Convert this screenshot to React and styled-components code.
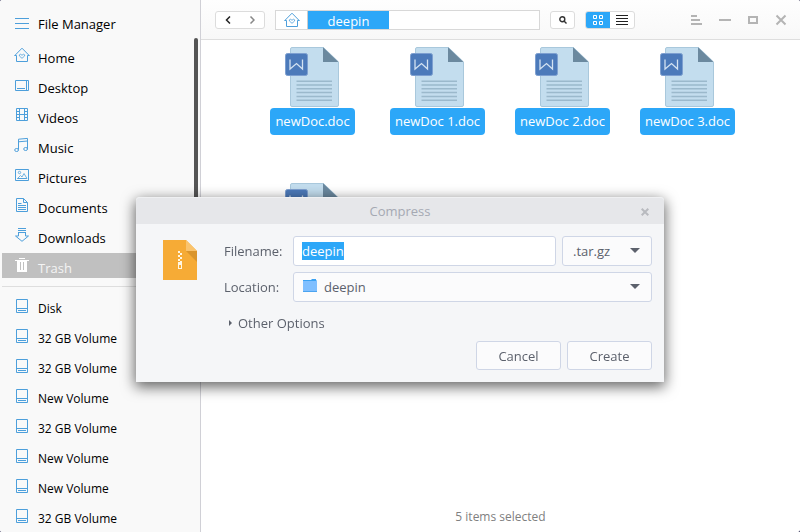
import React, { useEffect, useRef } from "react";
import styled, { createGlobalStyle } from "styled-components";

const GlobalStyle = createGlobalStyle`
  *, *::before, *::after { box-sizing: border-box; }
  body {
    margin: 0;
    background: #12103c;
    font-family: "Open Sans", "Noto Sans", sans-serif;
    font-size: 13px;
    line-height: 18px;
    color: #000;
    overflow: hidden;
  }
  button, input, select { font: inherit; color: inherit; margin: 0; }
  svg { display: block; flex: none; }
`;

const Window = styled.div`
  display: flex;
  height: 100vh;
  overflow: hidden;
  background: #fff;
  border-radius: 2px;
`;

/* ---------- sidebar ---------- */

const Sidebar = styled.aside`
  position: relative;
  flex: none;
  width: 201px;
  padding-left: 2px;
  background: #f9f9f9;
  border-right: 1px solid #d0d0d6;
  overflow: hidden;
`;

const SidebarTitle = styled.h1`
  display: flex;
  align-items: center;
  gap: 9px;
  height: 43px;
  margin: 0;
  padding: 4px 0 0 13px;
  font-size: 13px;
  font-weight: 400;
`;

const PlaceList = styled.ul`
  display: grid;
  gap: 5px;
  margin: 0;
  padding: 0;
  list-style: none;
  font-size: ${(p) => (p.$small ? 12 : 13)}px;
`;

const Place = styled.a`
  display: flex;
  align-items: flex-start;
  gap: 8px;
  height: 25px;
  padding: 4px 0 0 12px;
  text-decoration: none;
  color: ${(p) => (p.$active ? "#f4f4f4" : "#000")};
  background: ${(p) => (p.$active ? "#c0c0c0" : "transparent")};
`;

const PlaceName = styled.span`
  padding-top: 2px;
`;

const Divider = styled.hr`
  height: 1px;
  margin: 8px 0 7px;
  border: 0;
  background: #dedede;
`;

const ScrollThumb = styled.div`
  position: absolute;
  top: 38px;
  right: 2px;
  width: 4px;
  height: 50%;
  border-radius: 2px;
  background: #555;
`;

/* ---------- toolbar ---------- */

const Main = styled.main`
  display: flex;
  flex: 1;
  flex-direction: column;
  min-width: 0;
`;

const Toolbar = styled.header`
  display: flex;
  align-items: center;
  gap: 10px;
  height: 40px;
  padding: 1px 11px 0 14px;
  border-bottom: 1px solid #dedede;
  background: linear-gradient(#fefefe, #f8f8f8);
`;

const Group = styled.div`
  display: flex;
  height: 18px;
  border: 1px solid #dcdcdc;
  border-radius: 3px;
  background: #fff;
  overflow: hidden;
`;

const ToolButton = styled.button`
  display: flex;
  align-items: center;
  justify-content: center;
  width: ${(p) => p.$width || 24}px;
  padding: 0;
  border: 0;
  color: ${(p) => p.$color || "#333"};
  background: ${(p) => (p.$on ? "#2ca7f8" : "transparent")};
`;

const PathBar = styled.nav`
  display: flex;
  flex: 0 1 265px;
  height: 20px;
  border: 1px solid #d8d8d8;
  background: #fff;
`;

const PathHome = styled.a`
  display: flex;
  align-items: center;
  justify-content: center;
  width: 32px;
  border-right: 1px solid #ccc;
`;

const PathPart = styled.a`
  width: 81px;
  line-height: 20px;
  text-align: center;
  text-decoration: none;
  color: #fff;
  background: #2ca7f8;
`;

const WindowControls = styled.div`
  display: flex;
  gap: 12px;
  margin-left: auto;
`;

const WindowButton = styled.button`
  width: 16px;
  height: 16px;
  padding: 0;
  border: 0;
  background: transparent;
`;

/* ---------- files ---------- */

const Files = styled.ul`
  display: grid;
  flex: 1;
  grid-template-columns: repeat(auto-fill, 125px);
  grid-auto-rows: 136px;
  align-content: start;
  margin: 0;
  padding: 7px 0 0 49px;
  list-style: none;
`;

const File = styled.li`
  display: flex;
  flex-direction: column;
  align-items: center;
  gap: 1px;
`;

const FileName = styled.span`
  padding: 0 5px;
  border-radius: 4px;
  line-height: 27px;
  color: #fff;
  background: #2ca7f8;
`;

const StatusBar = styled.footer`
  height: 24px;
  font-size: 12px;
  text-align: center;
  color: #808080;
`;

/* ---------- dialog ---------- */

const Overlay = styled.div`
  position: fixed;
  inset: 0;
  display: flex;
  align-items: flex-start;
  justify-content: center;
  padding-top: 197px;
`;

const Dialog = styled.div`
  width: 66%;
  border-radius: 4px 4px 0 0;
  color: #5c616c;
  background: #f5f6f8;
  box-shadow: 0 4px 14px 1px rgba(0, 0, 0, 0.6);
`;

const DialogHeader = styled.header`
  display: grid;
  grid-template-columns: 38px 1fr 38px;
  align-items: center;
  height: 27px;
  border-top: 1px solid #eff0f2;
  border-radius: 4px 4px 0 0;
  background: #e6e7ea;
`;

const DialogTitle = styled.h2`
  grid-column: 2;
  margin: 0;
  font-size: 13px;
  font-weight: 400;
  line-height: 27px;
  text-align: center;
  color: #a5a9b3;
`;

const CloseButton = styled.button`
  display: flex;
  justify-content: center;
  padding: 0;
  border: 0;
  background: transparent;
`;

const DialogBody = styled.form`
  display: flex;
  gap: 27px;
  padding: 12px 12px 12px 27px;
`;

const ArchivePicture = styled.div`
  padding-top: 4px;
`;

const Fields = styled.div`
  display: grid;
  flex: 1;
  grid-template-columns: 63px 1fr 90px;
  gap: 6px;
  align-items: center;
`;

const Label = styled.label`
  white-space: nowrap;
`;

const NameInput = styled.input`
  width: 100%;
  height: 30px;
  padding: 0 8px;
  border: 1px solid #cfd6e6;
  border-radius: 3px;
  outline: none;
  background: #fff;
  &::selection { color: #fff; background: #2ca7f8; }
`;

const SelectBox = styled.div`
  position: relative;
  grid-column: ${(p) => (p.$wide ? "span 2" : "auto")};
`;

const Select = styled.select`
  display: block;
  width: 100%;
  height: 30px;
  padding: 0 30px 0 ${(p) => (p.$icon ? 30 : 10)}px;
  border: 1px solid #cfd6e6;
  border-radius: 3px;
  appearance: none;
  background: #fbfbfc;
`;

const SelectArrow = styled.svg`
  position: absolute;
  top: 12px;
  right: 12px;
  pointer-events: none;
`;

const SelectIcon = styled.svg`
  position: absolute;
  top: 6px;
  left: 9px;
  pointer-events: none;
`;

const Expander = styled.button`
  display: flex;
  grid-column: 1 / -1;
  align-items: center;
  justify-self: start;
  gap: 6px;
  height: 27px;
  padding: 2px 0 0 5px;
  border: 0;
  background: transparent;
`;

const Actions = styled.div`
  display: flex;
  grid-column: 1 / -1;
  justify-content: flex-end;
  gap: 6px;
`;

const ActionButton = styled.button`
  width: 85px;
  height: 29px;
  padding: 0;
  border: 1px solid #cfd6e6;
  border-radius: 3px;
  background: #fbfbfc;
`;

/* ---------- drawings ---------- */

const HomeIcon = () => (
  <svg width="16" height="16" viewBox="0 0 16 16" fill="none" stroke="#4d9fdb">
    <path d="M.8 8.5 8 1.2l7.2 7.3M.5 8.5h2v6h11v-6h2" />
    <path d="M8 11.3 5.400 9V7.800L6.300 7.200 8 8.200l1.700-1 .9.6V9z" strokeWidth=".8" />
  </svg>
);

const shapes = {
  Desktop: (
    <>
      <path d="M1.5 3.5h13v10h-13zM12.5 3.5v10" />
      <path d="M3 11.5h8" />
    </>
  ),
  Videos: (
    <path d="M2.5 1.5h11v12h-11zM5.5 1.5v12M10.5 1.5v12M5.5 7.5h5M2.5 4.5h3M2.5 7.5h3M2.5 10.5h3M10.5 4.5h3M10.5 7.5h3M10.5 10.5h3" />
  ),
  Music: (
    <>
      <path d="M4.5 12.5V2.2l9-.8v10.800M4.5 4.800l9-.8" />
      <ellipse cx="2.600" cy="13" rx="1.900" ry="1.500" />
      <ellipse cx="11.600" cy="12" rx="1.900" ry="1.500" />
    </>
  ),
  Pictures: (
    <>
      <path d="M1.5 2.5h13v11h-13z" />
      <path d="m3.5 11.5 3-3 1.5 1.5 2-3.5 3 5zM3.5 11.5h9" strokeWidth=".8" />
      <circle cx="5.5" cy="5.500" r="1.2" strokeWidth=".8" />
    </>
  ),
  Documents: (
    <path d="M2.5 1.5h7l4 4v9h-11zM9.5 1.5v4h4M4 6.5h3.5M4 8.5h8M4 10.5h8M4 12.5h8" />
  ),
  Downloads: (
    <path d="M4 1.5h8M4 3.5h8M4 5.5h8M4.500 5.500v3.500h-3L8 14.300l6.500-5.300h-3V5.500" />
  ),
  Disk: <path d="M2.5 1.5h11v13h-11zM2.5 10.5h11M4 12.5h8" />,
};

const PlaceIcon = ({ kind }) => {
  if (kind === "Home") return <HomeIcon />;
  if (kind === "Trash")
    return (
      <svg width="16" height="16" viewBox="0 0 16 16">
        <path
          fill="#fff"
          fillRule="evenodd"
          d="M5 1h6v1h-6zM1 3h14v1h-14zM3 4h10v11H3zM6 5v8h1v-8zM9 5v8h1v-8z"
        />
      </svg>
    );
  return (
    <svg width="16" height="16" viewBox="0 0 16 16" fill="none" stroke="#4d9fdb">
      {shapes[kind]}
    </svg>
  );
};

const DocIcon = () => (
  <svg width="55" height="60" viewBox="0 0 55 60" fill="none">
    <path d="M7 .5h31.5L53.5 15v43q0 1.500-1.500 1.500H7q-1.500 0-1.500-1.500V2Q5.500.5 7 .5z" fill="#c3ddee" stroke="#a9c8dc" />
    <path d="M38 .3 53.500 15H38z" fill="#6b899f" />
    <path d="M11.500 34.200h35.500M11.500 38h35.500M11.500 41.800h35.500M11.500 45.600h35.500M11.500 49.400h35.500M11.500 53.200h35.500" stroke="#9bb9cc" strokeWidth="1.500" />
    <rect x=".5" y="6.500" width="22" height="22" rx="2" fill="#4c7aba" stroke="#7d9fd0" />
    <path d="M5 12.500v9.500l6.500-5.500L17.500 22v-9.500" stroke="#d3e2f1" strokeWidth="1.300" />
  </svg>
);

const ArchiveIcon = () => (
  <svg width="34" height="40" viewBox="0 0 34 40">
    <path d="M0 0h23l11 11v29H0z" fill="#f6ab36" />
    <path d="M23 11h11v11z" fill="#da952d" />
    <path d="M23 0v11h11z" fill="#fac36c" />
    <path
      fill="#fff6e4"
      fillRule="evenodd"
      d="M15 11h2v2h-2zM17 13h2v2h-2zM15 15h2v2h-2zM17 17h2v2h-2zM15 19h2v2h-2zM17 21h2v1h-2zM15 22h4v7h-4zM16 25v3h2v-3z"
    />
  </svg>
);

const Arrow = () => (
  <SelectArrow width="10" height="5" viewBox="0 0 10 5">
    <path d="M0 0h10L5 5z" fill="#5c616c" />
  </SelectArrow>
);

/* ---------- data ---------- */

const places = ["Home", "Desktop", "Videos", "Music", "Pictures", "Documents", "Downloads", "Trash"];
const volumes = ["Disk", "32 GB Volume", "32 GB Volume", "New Volume", "32 GB Volume", "New Volume", "New Volume", "32 GB Volume"];
const files = ["newDoc.doc", "newDoc 1.doc", "newDoc 2.doc", "newDoc 3.doc", ""];

const PlaceRow = ({ name, kind, active }) => (
  <li>
    <Place href="#" $active={active}>
      <PlaceIcon kind={kind} />
      <PlaceName>{name}</PlaceName>
    </Place>
  </li>
);

function CompressDialog() {
  const nameRef = useRef(null);
  useEffect(() => {
    nameRef.current.focus();
    nameRef.current.select();
  }, []);

  return (
    <Overlay>
      <Dialog role="dialog" aria-labelledby="dialog-title">
        <DialogHeader>
          <DialogTitle id="dialog-title">Compress</DialogTitle>
          <CloseButton type="button" aria-label="Close dialog">
            <svg width="8" height="8" viewBox="0 0 8 8" stroke="#b8babf" strokeWidth="2">
              <path d="m.7.7 6.600 6.600M7.300.7.7 7.300" />
            </svg>
          </CloseButton>
        </DialogHeader>
        <DialogBody onSubmit={(e) => e.preventDefault()}>
          <ArchivePicture>
            <ArchiveIcon />
          </ArchivePicture>
          <Fields>
            <Label htmlFor="filename">Filename:</Label>
            <NameInput id="filename" ref={nameRef} defaultValue="deepin" autoComplete="off" spellCheck={false} />
            <SelectBox>
              <Select aria-label="Archive type" defaultValue=".tar.gz">
                <option>.tar.gz</option>
                <option>.zip</option>
              </Select>
              <Arrow />
            </SelectBox>
            <Label htmlFor="location">Location:</Label>
            <SelectBox $wide>
              <Select id="location" $icon defaultValue="deepin">
                <option>deepin</option>
              </Select>
              <SelectIcon width="16" height="16" viewBox="0 0 16 16">
                <path d="M1 2h8l1-1h4v1l1 1v3H1z" fill="#3ba2f3" />
                <path d="M1 3h14v11H1z" fill="#80bfff" />
                <path d="M1 13h14v1H1z" fill="#4ba4f0" />
              </SelectIcon>
              <Arrow />
            </SelectBox>
            <Expander type="button" aria-expanded="false">
              <svg width="3" height="6" viewBox="0 0 3 6">
                <path d="M0 0l3 3-3 3z" fill="#5c616c" />
              </svg>
              Other Options
            </Expander>
            <Actions>
              <ActionButton type="button">Cancel</ActionButton>
              <ActionButton type="submit">Create</ActionButton>
            </Actions>
          </Fields>
        </DialogBody>
      </Dialog>
    </Overlay>
  );
}

export default function App() {
  return (
    <>
      <GlobalStyle />
      <Window>
        <Sidebar>
          <SidebarTitle>
            <svg width="14" height="11" viewBox="0 0 14 11" stroke="#4d9fdb">
              <path d="M0 .5h14M0 5.500h14M0 10.500h14" />
            </svg>
            File Manager
          </SidebarTitle>
          <PlaceList>
            {places.map((name) => (
              <PlaceRow key={name} name={name} kind={name} active={name === "Trash"} />
            ))}
          </PlaceList>
          <Divider />
          <PlaceList $small>
            {volumes.map((name, i) => (
              <PlaceRow key={i} name={name} kind="Disk" />
            ))}
          </PlaceList>
          <ScrollThumb />
        </Sidebar>
        <Main>
          <Toolbar>
            <Group>
              <ToolButton aria-label="Back" $color="#222">
                <svg width="6" height="8" viewBox="0 0 6 8" fill="none" stroke="currentColor" strokeWidth="1.500">
                  <path d="M5 .5 1.500 4 5 7.500" />
                </svg>
              </ToolButton>
              <ToolButton aria-label="Forward" $color="#888">
                <svg width="6" height="8" viewBox="0 0 6 8" fill="none" stroke="currentColor" strokeWidth="1.500">
                  <path d="M1.500 .5 5 4 1.500 7.500" />
                </svg>
              </ToolButton>
            </Group>
            <PathBar>
              <PathHome href="#" aria-label="Home">
                <HomeIcon />
              </PathHome>
              <PathPart href="#">deepin</PathPart>
            </PathBar>
            <Group>
              <ToolButton aria-label="Search" $width={23}>
                <svg width="8" height="8" viewBox="0 0 8 8" fill="none" stroke="currentColor" strokeWidth="1.400">
                  <circle cx="3.300" cy="3.300" r="2.500" />
                  <path d="M5 5l2.500 2.500" />
                </svg>
              </ToolButton>
            </Group>
            <Group>
              <ToolButton aria-label="Icon view" $on>
                <svg width="10" height="10" viewBox="0 0 10 10" fill="none" stroke="#fff">
                  <path d="M.5.5h3v3h-3zM6.500.5h3v3h-3zM.5 6.500h3v3h-3zM6.500 6.500h3v3h-3z" />
                </svg>
              </ToolButton>
              <ToolButton aria-label="List view">
                <svg width="12" height="10" viewBox="0 0 12 10" stroke="#222">
                  <path d="M0 .5h12M0 3.500h12M0 6.500h12M0 9.500h12" />
                </svg>
              </ToolButton>
            </Group>
            <WindowControls>
              <WindowButton aria-label="Menu">
                <svg width="16" height="16" viewBox="0 0 16 16" stroke="#b4b4b4" strokeWidth="2">
                  <path d="M2 4h6M2 8h9M2 12h11" />
                </svg>
              </WindowButton>
              <WindowButton aria-label="Minimize">
                <svg width="16" height="16" viewBox="0 0 16 16" stroke="#b4b4b4" strokeWidth="2">
                  <path d="M2 8h12" />
                </svg>
              </WindowButton>
              <WindowButton aria-label="Maximize">
                <svg width="16" height="16" viewBox="0 0 16 16" fill="none" stroke="#b4b4b4" strokeWidth="2">
                  <path d="M4 5h8v6H4z" />
                </svg>
              </WindowButton>
              <WindowButton aria-label="Close">
                <svg width="16" height="16" viewBox="0 0 16 16" stroke="#b4b4b4" strokeWidth="2">
                  <path d="m3.500 3.500 9 9M12.500 3.500l-9 9" />
                </svg>
              </WindowButton>
            </WindowControls>
          </Toolbar>
          <Files>
            {files.map((name, i) => (
              <File key={i}>
                <DocIcon />
                {name && <FileName>{name}</FileName>}
              </File>
            ))}
          </Files>
          <StatusBar>5 items selected</StatusBar>
        </Main>
      </Window>
      <CompressDialog />
    </>
  );
}
